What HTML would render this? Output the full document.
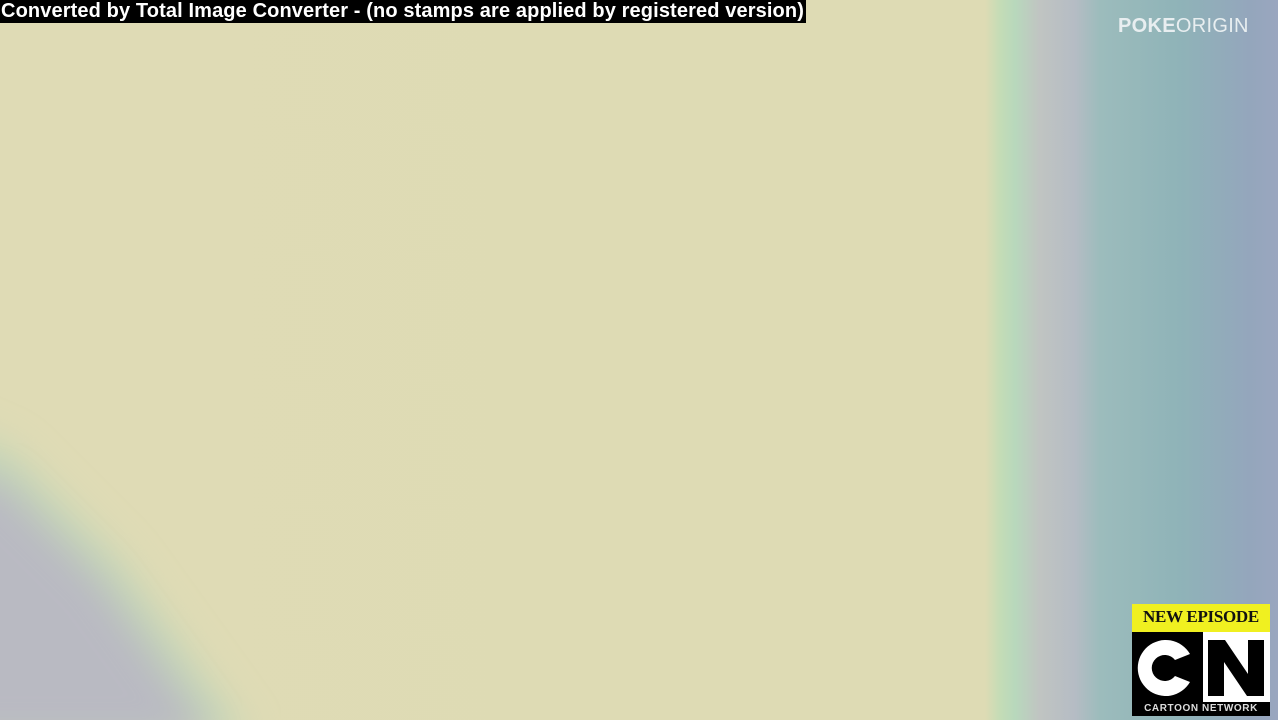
<!DOCTYPE html>
<html><head><style>
html,body{margin:0;padding:0}
body{width:1278px;height:720px;position:relative;overflow:hidden;
background:linear-gradient(90deg,#dfdbb5 0px,#dedbb4 985px,#c4dcb6 1000px,#b8d8bc 1015px,#c0c4c2 1040px,#b5bcc4 1075px,#9cbcbc 1100px,#8fb3b8 1180px,#94a6bc 1250px,#9aa6bf 1278px);}
svg.bg{position:absolute;left:0;top:0}
.banner{position:absolute;left:0;top:0;height:23px;width:806px;background:#000;color:#fff;
font:bold 20px "Liberation Sans",sans-serif;line-height:23px;white-space:nowrap;padding-left:1px;box-sizing:border-box;letter-spacing:0.12px;overflow:hidden}
.po{position:absolute;left:1118px;top:15px;font:20px "Liberation Sans",sans-serif;color:#e8eef0;letter-spacing:0.3px}
.po b{font-weight:bold}
.cn{position:absolute;left:1130px;top:604px;width:140px;height:112px;}
</style></head><body>
<svg class="bg" width="1278" height="720">
<defs><filter id="b"><feGaussianBlur stdDeviation="18"/></filter></defs>
<polygon points="-60,420 10,450 120,560 250,740 -60,740" fill="#c4d6b8" filter="url(#b)"/>
<polygon points="-60,470 0,480 100,580 215,740 -60,740" fill="#b9bac2" filter="url(#b)"/>
</svg>
<div class="banner">Converted by Total Image Converter - (no stamps are applied by registered version)</div>
<div class="po"><b>POKE</b>ORIGIN</div>
<div class="cn">
<div style="position:absolute;left:2px;top:0;width:138px;height:28px;background:#f0f020;"></div>
<div style="position:absolute;left:2px;top:3px;width:138px;text-align:center;font:bold 17px 'Liberation Serif',serif;color:#111;letter-spacing:-0.3px">NEW EPISODE</div>
<div style="position:absolute;left:2px;top:28px;width:138px;height:84px;background:#000"></div>
<svg style="position:absolute;left:2px;top:28px" width="138" height="70" viewBox="0 0 138 70">
<rect x="0" y="0" width="67" height="70" fill="#000"/>
<rect x="71" y="0" width="67" height="70" fill="#fff"/>
<path d="M58 22 A28 28 0 1 0 58 50 L43 44 A13 13 0 1 1 43 28 Z" fill="#fff"/>
<path d="M76 8 H93 L116 42 V8 H132 V64 H115 L92 30 V64 H76 Z" fill="#000"/>
</svg>
<div style="position:absolute;left:2px;top:99px;width:138px;text-align:center;font:bold 10px 'Liberation Sans',sans-serif;color:#ddd;letter-spacing:0.6px">CARTOON NETWORK</div>
</div>
</body></html>
